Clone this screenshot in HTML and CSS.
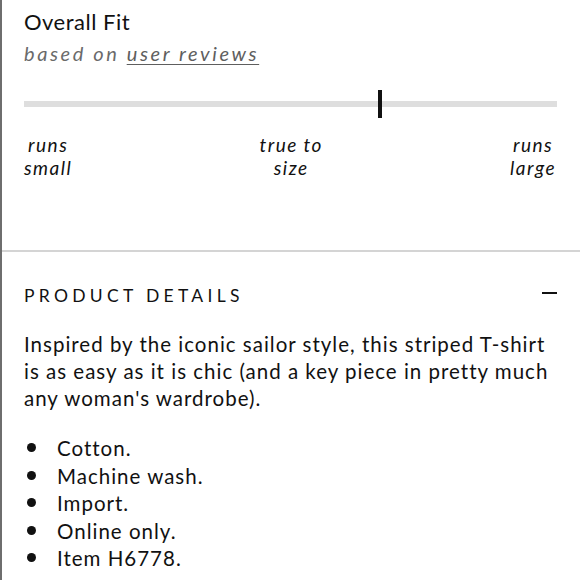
FILE: index.html
```html
<!DOCTYPE html>
<html>
<head>
<meta charset="utf-8">
<link rel="stylesheet" href="styles.css">
</head>
<body>
<div class="page">
  <section class="fit">
    <h2 class="fit-title">Overall Fit</h2>
    <p class="fit-sub">based on <a class="fit-link" href="#">user reviews</a></p>
    <div class="scale">
      <div class="track"></div>
      <div class="marker" style="left: 66.5%"></div>
    </div>
    <div class="labels">
      <span class="label label-left">runs<br>small</span>
      <span class="label label-mid">true to<br>size</span>
      <span class="label label-right">runs<br>large</span>
    </div>
  </section>
  <section class="details">
    <div class="details-head">
      <h3 class="details-title">PRODUCT DETAILS</h3>
      <span class="minus"></span>
    </div>
    <p class="details-text">Inspired by the iconic sailor style, this striped T-shirt is as easy as it is chic (and a key piece in pretty much any woman's wardrobe).</p>
    <ul class="details-list">
      <li>Cotton.</li>
      <li>Machine wash.</li>
      <li>Import.</li>
      <li>Online only.</li>
      <li>Item H6778.</li>
    </ul>
  </section>
</div>
</body>
</html>
```
FILE: styles.css
```css
html, body {
  margin: 0;
  padding: 0;
  background: #fff;
}
body {
  font-family: "Lato", "Noto Sans", sans-serif;
  color: #111;
  overflow: hidden;
}
.page {
  border-left: 2px solid #6e6e6e;
  height: 580px;
  box-sizing: border-box;
}
.fit {
  padding: 10px 23px 0 22px;
  height: 252px;
  box-sizing: border-box;
  border-bottom: 2px solid #d4d4d4;
}
.fit-title {
  margin: 0;
  font-weight: 400;
  font-size: 22px;
  line-height: 24px;
  letter-spacing: 0.5px;
  color: #111;
}
.fit-sub {
  margin: 7px 0 0;
  font-style: italic;
  font-size: 20px;
  line-height: 24px;
  letter-spacing: 2.6px;
  color: #6a6a6a;
}
.fit-link {
  color: #5e5e5e;
  text-decoration: underline;
  text-underline-offset: 3px;
  text-decoration-thickness: 1px;
}
.scale {
  position: relative;
  margin-top: 25px;
  padding-top: 11px;
  height: 28px;
  box-sizing: border-box;
}
.track {
  height: 6px;
  background: #dedede;
}
.marker {
  position: absolute;
  top: 0;
  width: 4px;
  height: 28px;
  background: #111;
}
.labels {
  display: flex;
  justify-content: space-between;
  margin-top: 15px;
  padding-right: 1px;
}
.label {
  font-style: italic;
  font-size: 19px;
  line-height: 23px;
  letter-spacing: 1.5px;
  text-align: center;
  color: #111;
}
.details {
  padding: 0 23px 0 22px;
}
.details-head {
  display: flex;
  justify-content: space-between;
  align-items: flex-start;
  margin-top: 33px;
}
.details-title {
  margin: 0;
  font-weight: 400;
  font-size: 17.5px;
  line-height: 22px;
  letter-spacing: 4.3px;
  color: #111;
}
.minus {
  width: 15px;
  height: 2px;
  margin-top: 7px;
  background: #111;
}
.details-text {
  margin: 24px 0 0;
  font-size: 20.5px;
  line-height: 27px;
  letter-spacing: 1px;
  color: #111;
}
.details-list {
  margin: 23px 0 0;
  padding: 0;
  list-style: none;
}
.details-list li {
  position: relative;
  padding-left: 33px;
  font-size: 20.5px;
  line-height: 27.5px;
  letter-spacing: 1px;
}
.details-list li::before {
  content: "";
  position: absolute;
  left: 3px;
  top: 8px;
  width: 9px;
  height: 9px;
  border-radius: 50%;
  background: #111;
}
```
